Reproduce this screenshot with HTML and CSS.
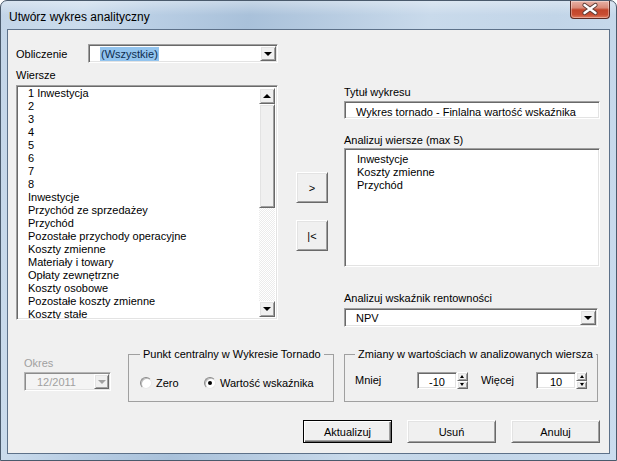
FILE: index.html
```html
<!DOCTYPE html>
<html lang="pl">
<head>
  <meta charset="UTF-8">
  <title>Utwórz wykres analityczny</title>
  <link rel="stylesheet" href="styles.css">
</head>
<body>

<div class="window">
  <div class="titlebar">
    <span class="title">Utwórz wykres analityczny</span>
    <div class="close">
      <svg width="40" height="18" viewBox="0 0 40 18">
        <path d="M14.5 5 L25.5 13 M25.5 5 L14.5 13" stroke="#5a3a34" stroke-width="4.2" stroke-linecap="round"/>
        <path d="M14.5 5 L25.5 13 M25.5 5 L14.5 13" stroke="#fff" stroke-width="2.4" stroke-linecap="round"/>
      </svg>
    </div>
  </div>

  <div class="client">
    <div class="top">

      <!-- lewa kolumna -->
      <div class="col-left">
        <div class="row-calc">
          <span class="calc-lbl">Obliczenie</span>
          <div class="combo calc-combo">
            <span class="combo-text"><span class="sel">(Wszystkie)</span></span>
            <span class="drop"><i class="tri"></i></span>
          </div>
        </div>
        <div class="lbl rows-lbl">Wiersze</div>
        <div class="listbox rows-list">
          <ul class="items">
            <li>1 Inwestycja</li>
            <li>2</li>
            <li>3</li>
            <li>4</li>
            <li>5</li>
            <li>6</li>
            <li>7</li>
            <li>8</li>
            <li>Inwestycje</li>
            <li>Przychód ze sprzedażey</li>
            <li>Przychód</li>
            <li>Pozostałe przychody operacyjne</li>
            <li>Koszty zmienne</li>
            <li>Materiały i towary</li>
            <li>Opłaty zewnętrzne</li>
            <li>Koszty osobowe</li>
            <li>Pozostałe koszty zmienne</li>
            <li>Koszty stałe</li>
          </ul>
          <div class="vscroll">
            <div class="sb-btn"><i class="tri up"></i></div>
            <div class="sb-thumb"></div>
            <div class="sb-track"></div>
            <div class="sb-btn"><i class="tri"></i></div>
          </div>
        </div>
      </div>

      <!-- przyciski przenoszenia -->
      <div class="col-mid">
        <div class="btn move">&gt;</div>
        <div class="btn move">|&lt;</div>
      </div>

      <!-- prawa kolumna -->
      <div class="col-right">
        <div class="lbl title-lbl">Tytuł wykresu</div>
        <div class="textbox">Wykres tornado - Finlalna wartość wskaźnika</div>
        <div class="lbl an-lbl">Analizuj wiersze (max 5)</div>
        <div class="listbox picked-list">
          <ul class="items">
            <li>Inwestycje</li>
            <li>Koszty zmienne</li>
            <li>Przychód</li>
          </ul>
        </div>
        <div class="lbl ind-lbl">Analizuj wskaźnik rentowności</div>
        <div class="combo ind-combo">
          <span class="combo-text">NPV</span>
          <span class="drop"><i class="tri"></i></span>
        </div>
      </div>
    </div>

    <div class="bottom">
      <div class="okres">
        <div class="lbl disabled">Okres</div>
        <div class="combo okres-combo">
          <span class="combo-text">12/2011</span>
          <span class="drop"><i class="tri gray"></i></span>
        </div>
      </div>

      <fieldset class="grp grp1">
        <legend>Punkt centralny w Wykresie Tornado</legend>
        <div class="radio-row">
          <span class="radio r-zero"><i class="circle"></i>Zero</span>
          <span class="radio"><i class="circle checked"></i>Wartość wskaźnika</span>
        </div>
      </fieldset>

      <fieldset class="grp grp2">
        <legend>Zmiany w wartościach w analizowanych wiersza</legend>
        <div class="spin-row">
          <span class="spin-lbl less">Mniej</span>
          <div class="spin">
            <span class="spin-val">-10</span>
            <span class="spin-btns"><i class="sp"><i class="tri small up"></i></i><i class="sp"><i class="tri small"></i></i></span>
          </div>
          <span class="spin-lbl more">Więcej</span>
          <div class="spin">
            <span class="spin-val">10</span>
            <span class="spin-btns"><i class="sp"><i class="tri small up"></i></i><i class="sp"><i class="tri small"></i></i></span>
          </div>
        </div>
      </fieldset>
    </div>

    <div class="actions">
      <div class="btn cmd default">Aktualizuj</div>
      <div class="btn cmd">Usuń</div>
      <div class="btn cmd">Anuluj</div>
    </div>
  </div>
</div>

</body>
</html>
```

FILE: styles.css
```css
* {
  box-sizing: border-box;
}

body {
  margin: 0;
  font-family: "Liberation Sans", Arial, sans-serif;
  font-size: 11px;
  color: #000;
  background: #fff;
}

/* okno */
.window {
  width: 617px;
  height: 461px;
  display: flex;
  flex-direction: column;
  border: 1px solid #4a5a6c;
  border-radius: 7px 7px 0 0;
  background:
    linear-gradient(180deg, rgba(255,255,255,0.35) 0, rgba(255,255,255,0) 14px),
    linear-gradient(100deg, #c3d5e8 0%, #cadbec 12%, #b9cee4 22%, #a9c1da 36%, #b5cae0 46%, #c9daeb 62%, #c2d5e8 80%, #cbdcee 100%);
}

.titlebar {
  height: 28px;
  display: flex;
  align-items: flex-start;
}

.title {
  margin: 9px 0 0 8px;
  font-size: 12px;
  line-height: 14px;
  color: #000;
}

.close {
  margin-left: auto;
  margin-right: 6px;
  width: 40px;
  height: 18px;
  border: 1px solid #5c2a22;
  border-top: none;
  border-radius: 0 0 4px 4px;
  background: linear-gradient(180deg, #e8b2a6 0%, #d98a78 40%, #c2452b 52%, #c84e33 80%, #e07b5e 100%);
  box-shadow: inset 0 0 0 1px rgba(255,255,255,0.35);
}

.close svg {
  display: block;
  margin: -1px 0 0 -1px;
}

.client {
  flex: 1;
  margin: 0 6px 6px 6px;
  border: 1px solid #5d7189;
  background: #f0f0f0;
  padding: 14px 9px 0 8px;
}

/* wspolne */
.lbl {
  line-height: 14px;
}

.disabled {
  color: #a0a0a0;
}

.tri {
  display: block;
  width: 0;
  height: 0;
  border-left: 4px solid transparent;
  border-right: 4px solid transparent;
  border-top: 4px solid #000;
}

.tri.up {
  border-top: none;
  border-bottom: 4px solid #000;
}

.tri.gray {
  border-top-color: #a0a0a0;
}

.tri.small {
  border-left-width: 2.5px;
  border-right-width: 2.5px;
  border-top-width: 3px;
}

.tri.small.up {
  border-top-width: 0;
  border-bottom-width: 3px;
}

.combo,
.textbox,
.listbox {
  background: #fff;
  border: 1px solid;
  border-color: #a0a0a0 #fff #fff #a0a0a0;
  box-shadow: inset 1px 1px 0 #696969, inset -1px -1px 0 #e3e3e3;
}

.btn,
.drop,
.sb-btn,
.sb-thumb,
.sp {
  background: #f0f0f0;
  border: 1px solid;
  border-color: #fff #696969 #696969 #fff;
  box-shadow: inset 1px 1px 0 #e3e3e3, inset -1px -1px 0 #a0a0a0;
}

/* combo */
.combo {
  display: flex;
  align-items: center;
  height: 19px;
  padding: 1px;
}

.combo-text {
  flex: 1;
  line-height: 14px;
  padding-left: 10px;
  white-space: nowrap;
}

.combo .drop {
  width: 16px;
  align-self: stretch;
  display: flex;
  align-items: center;
  justify-content: center;
}

.sel {
  background: #93c4ee;
  color: #0e2c4f;
  padding: 1px;
}

/* lewa kolumna */
.top {
  display: flex;
}

.col-left {
  width: 262px;
}

.row-calc {
  display: flex;
  align-items: center;
  height: 19px;
}

.calc-lbl {
  width: 72px;
}

.calc-combo {
  width: 190px;
}

.rows-lbl {
  margin: 5px 0 3px 0;
}

.listbox {
  display: flex;
  padding: 2px;
  overflow: hidden;
}

.rows-list {
  height: 235px;
}

.items {
  flex: 1;
  list-style: none;
  margin: 0;
  padding: 0 0 0 9px;
  line-height: 13px;
  white-space: nowrap;
}

.rows-list .items {
  margin-top: -1px;
}

.vscroll {
  width: 16px;
  display: flex;
  flex-direction: column;
}

.sb-btn {
  height: 16px;
  display: flex;
  align-items: center;
  justify-content: center;
}

.sb-thumb {
  height: 104px;
}

.sb-track {
  flex: 1;
  background: repeating-conic-gradient(#fff 0 25%, #ebebeb 0 50%) 0 0 / 2px 2px;
}

/* srodek */
.col-mid {
  width: 32px;
  margin-left: 18px;
  padding-top: 128px;
  display: flex;
  flex-direction: column;
  gap: 17px;
}

.btn {
  display: flex;
  align-items: center;
  justify-content: center;
}

.move {
  height: 31px;
}

/* prawa kolumna */
.col-right {
  width: 256px;
  margin-left: 16px;
}

.title-lbl {
  margin-top: 41px;
}

.textbox {
  margin-top: 2px;
  height: 18px;
  line-height: 14px;
  padding: 3px 0 0 11px;
  white-space: nowrap;
}

.an-lbl {
  margin-top: 14px;
}

.picked-list {
  margin-top: 1px;
  height: 119px;
}

.picked-list .items {
  padding: 2px 0 0 10px;
}

.ind-lbl {
  margin-top: 24px;
}

.ind-combo {
  margin-top: 3px;
  width: 254px;
}

/* dol */
.bottom {
  display: flex;
  align-items: flex-start;
  margin-top: 20px;
}

.okres {
  margin-left: 8px;
  width: 87px;
  padding-top: 9px;
}

.okres-combo {
  margin-top: 2px;
  background: #f4f4f4;
  color: #a0a0a0;
  border-color: #b5b5b5 #fff #fff #b5b5b5;
  box-shadow: inset 1px 1px 0 #8c8c8c, inset -1px -1px 0 #e3e3e3;
}

.okres-combo .combo-text {
  padding-left: 11px;
}

.okres-combo .drop {
  width: 15px;
}

.grp {
  margin: 0;
  height: 55px;
  min-width: 0;
  border: 1px solid #a0a0a0;
  padding: 0 10px;
}

.grp legend {
  padding: 0 3px;
  line-height: 14px;
  white-space: nowrap;
}

.grp1 {
  margin-left: 17px;
  width: 206px;
  padding-left: 11px;
}

.grp2 {
  margin-left: 10px;
  width: 254px;
}

.radio-row {
  display: flex;
  margin-top: 15px;
  height: 14px;
  align-items: center;
}

.radio {
  display: flex;
  align-items: center;
}

.r-zero {
  width: 64px;
}

.circle {
  width: 12px;
  height: 12px;
  margin-right: 4px;
  border-radius: 50%;
  background: #fff;
  border: 1px solid;
  border-color: #8a8a8a #e8e8e8 #e8e8e8 #8a8a8a;
  box-shadow: inset 1px 1px 0 #bdbdbd;
  display: flex;
  align-items: center;
  justify-content: center;
}

.circle.checked::after {
  content: "";
  width: 4px;
  height: 4px;
  border-radius: 50%;
  background: #000;
}

.spin-row {
  display: flex;
  align-items: center;
  margin-top: 11px;
  height: 17px;
}

.spin-lbl {
  margin-top: -2px;
}

.less {
  width: 63px;
}

.more {
  margin-left: 13px;
  width: 56px;
}

.spin {
  width: 51px;
  height: 17px;
  display: flex;
}

.spin-val {
  width: 40px;
  background: #fff;
  border: 1px solid;
  border-color: #a0a0a0 #fff #fff #a0a0a0;
  box-shadow: inset 1px 1px 0 #696969, inset -1px -1px 0 #e3e3e3;
  text-align: center;
  line-height: 14px;
  padding-top: 2px;
}

.spin-btns {
  width: 11px;
  display: flex;
  flex-direction: column;
}

.sp {
  flex: 1;
  display: flex;
  align-items: center;
  justify-content: center;
}

/* przyciski */
.actions {
  display: flex;
  justify-content: flex-end;
  gap: 15px;
  margin-top: 18px;
}

.cmd {
  width: 89px;
  height: 23px;
}

.cmd.default {
  border: 1px solid #000;
  box-shadow: inset 1px 1px 0 #fff, inset -1px -1px 0 #696969, inset -2px -2px 0 #a0a0a0;
}
```
